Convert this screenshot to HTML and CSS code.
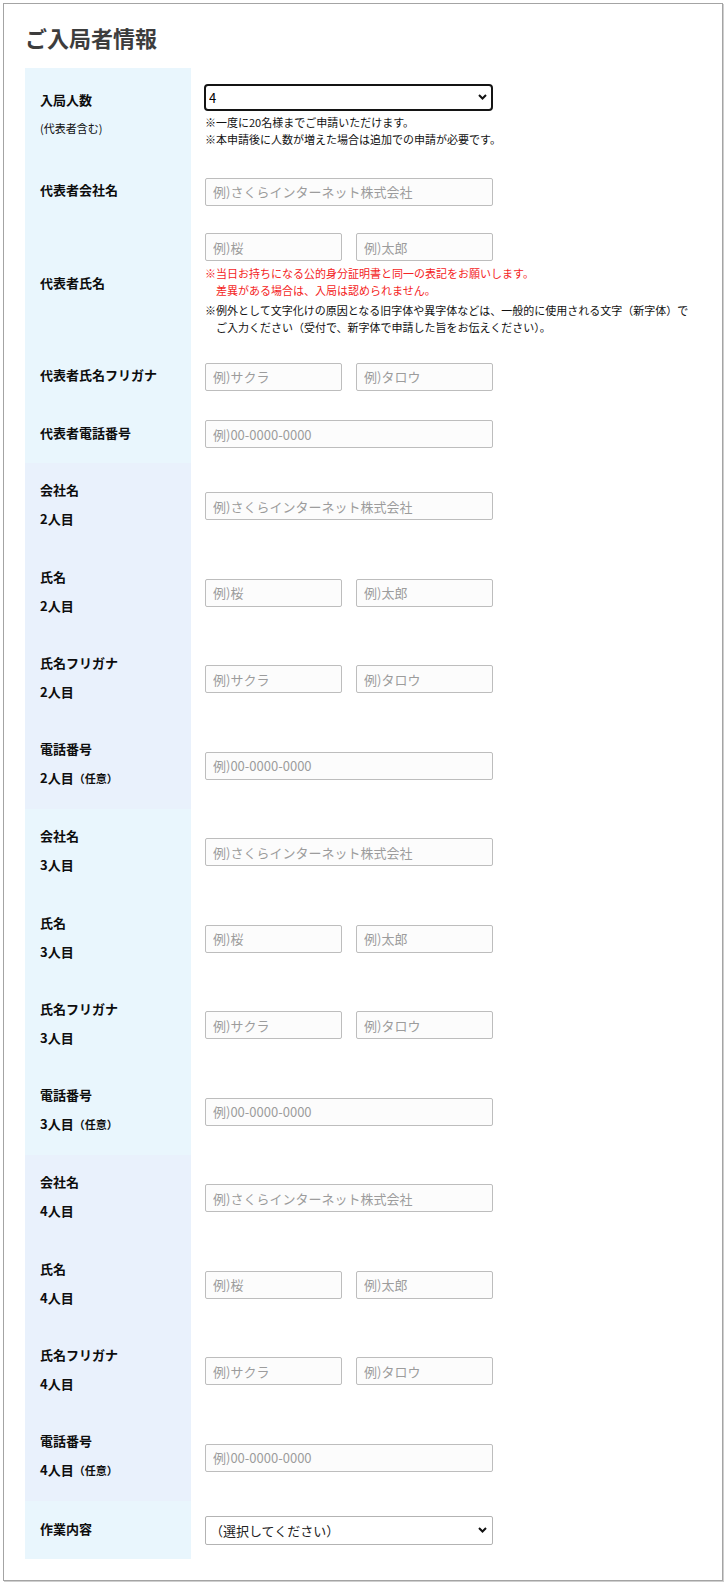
FILE: index.html
```html
<!DOCTYPE html>
<html lang="ja">
<head>
<meta charset="utf-8">
<title>ご入局者情報</title>
<link rel="stylesheet" href="styles.css">
</head>
<body>
<div class="page">
  <h2 class="title">ご入局者情報</h2>
  <div class="form">
    <div class="group g-a">
      <div class="row row-1">
        <div class="label"><span>入局人数</span><span class="sub">(代表者含む)</span></div>
        <div class="value">
          <div class="sel-wrap focus">
            <select class="sel"><option>4</option></select>
            <svg class="chev" viewBox="0 0 9 6"><polyline points="1,1 4.5,4.5 8,1" fill="none" stroke="#111" stroke-width="2"/></svg>
          </div>
          <p class="note">※一度に20名様までご申請いただけます。<br>※本申請後に人数が増えた場合は追加での申請が必要です。</p>
        </div>
      </div>
      <div class="row row-s">
        <div class="label"><span>代表者会社名</span></div>
        <div class="value"><input class="inp" type="text" placeholder="例)さくらインターネット株式会社"></div>
      </div>
      <div class="row row-3">
        <div class="label"><span>代表者氏名</span></div>
        <div class="value">
          <div class="pair"><input class="inp half" type="text" placeholder="例)桜"><input class="inp half" type="text" placeholder="例)太郎"></div>
          <p class="note warn">※当日お持ちになる公的身分証明書と同一の表記をお願いします。<br>差異がある場合は、入局は認められません。</p>
          <p class="note hang">※例外として文字化けの原因となる旧字体や異字体などは、一般的に使用される文字（新字体）で<br>ご入力ください（受付で、新字体で申請した旨をお伝えください）。</p>
        </div>
      </div>
      <div class="row row-s">
        <div class="label"><span>代表者氏名フリガナ</span></div>
        <div class="value"><div class="pair"><input class="inp half" type="text" placeholder="例)サクラ"><input class="inp half" type="text" placeholder="例)タロウ"></div></div>
      </div>
      <div class="row row-s">
        <div class="label"><span>代表者電話番号</span></div>
        <div class="value"><input class="inp" type="text" placeholder="例)00-0000-0000"></div>
      </div>
    </div>

    <div class="group g-b">
      <div class="row row-g">
        <div class="label"><span>会社名</span><span>2人目</span></div>
        <div class="value"><input class="inp" type="text" placeholder="例)さくらインターネット株式会社"></div>
      </div>
      <div class="row row-g">
        <div class="label"><span>氏名</span><span>2人目</span></div>
        <div class="value"><div class="pair"><input class="inp half" type="text" placeholder="例)桜"><input class="inp half" type="text" placeholder="例)太郎"></div></div>
      </div>
      <div class="row row-g">
        <div class="label"><span>氏名フリガナ</span><span>2人目</span></div>
        <div class="value"><div class="pair"><input class="inp half" type="text" placeholder="例)サクラ"><input class="inp half" type="text" placeholder="例)タロウ"></div></div>
      </div>
      <div class="row row-g">
        <div class="label"><span>電話番号</span><span>2人目<span class="opt">（任意）</span></span></div>
        <div class="value"><input class="inp" type="text" placeholder="例)00-0000-0000"></div>
      </div>
    </div>

    <div class="group g-a">
      <div class="row row-g">
        <div class="label"><span>会社名</span><span>3人目</span></div>
        <div class="value"><input class="inp" type="text" placeholder="例)さくらインターネット株式会社"></div>
      </div>
      <div class="row row-g">
        <div class="label"><span>氏名</span><span>3人目</span></div>
        <div class="value"><div class="pair"><input class="inp half" type="text" placeholder="例)桜"><input class="inp half" type="text" placeholder="例)太郎"></div></div>
      </div>
      <div class="row row-g">
        <div class="label"><span>氏名フリガナ</span><span>3人目</span></div>
        <div class="value"><div class="pair"><input class="inp half" type="text" placeholder="例)サクラ"><input class="inp half" type="text" placeholder="例)タロウ"></div></div>
      </div>
      <div class="row row-g">
        <div class="label"><span>電話番号</span><span>3人目<span class="opt">（任意）</span></span></div>
        <div class="value"><input class="inp" type="text" placeholder="例)00-0000-0000"></div>
      </div>
    </div>

    <div class="group g-b">
      <div class="row row-g">
        <div class="label"><span>会社名</span><span>4人目</span></div>
        <div class="value"><input class="inp" type="text" placeholder="例)さくらインターネット株式会社"></div>
      </div>
      <div class="row row-g">
        <div class="label"><span>氏名</span><span>4人目</span></div>
        <div class="value"><div class="pair"><input class="inp half" type="text" placeholder="例)桜"><input class="inp half" type="text" placeholder="例)太郎"></div></div>
      </div>
      <div class="row row-g">
        <div class="label"><span>氏名フリガナ</span><span>4人目</span></div>
        <div class="value"><div class="pair"><input class="inp half" type="text" placeholder="例)サクラ"><input class="inp half" type="text" placeholder="例)タロウ"></div></div>
      </div>
      <div class="row row-g">
        <div class="label"><span>電話番号</span><span>4人目<span class="opt">（任意）</span></span></div>
        <div class="value"><input class="inp" type="text" placeholder="例)00-0000-0000"></div>
      </div>
    </div>

    <div class="group g-a">
      <div class="row row-last">
        <div class="label"><span>作業内容</span></div>
        <div class="value">
          <div class="sel-wrap">
            <select class="sel"><option>（選択してください）</option></select>
            <svg class="chev" viewBox="0 0 9 6"><polyline points="1,1 4.5,4.5 8,1" fill="none" stroke="#111" stroke-width="2"/></svg>
          </div>
        </div>
      </div>
    </div>
  </div>
</div>
</body>
</html>
```

FILE: styles.css
```css
html, body {
  margin: 0;
  padding: 0;
  background: #ffffff;
}
body {
  font-family: "Noto Sans CJK JP", "Noto Sans", sans-serif;
  color: #111111;
}
.page {
  margin: 3px;
  width: 720px;
  box-sizing: border-box;
  border: 1px solid #a4a4a4;
  box-shadow: 1px 1px 0 #cfcfcf;
  padding: 18px 21px 21px;
}
.title {
  margin: 0 0 16px;
  font-size: 22px;
  line-height: 30px;
  font-weight: 700;
  color: #3d3d3d;
}
.row {
  display: grid;
  grid-template-columns: 166px 1fr;
}
.row-1 { min-height: 95px; }
.row-s { min-height: 57.5px; }
.row-3 { min-height: 127.5px; }
.row-g { min-height: 86.5px; }
.row-last { min-height: 58px; }

.label {
  display: flex;
  flex-direction: column;
  justify-content: center;
  padding: 0 15px 4px;
  font-size: 13px;
  font-weight: 700;
  line-height: 29px;
  color: #0d0d0d;
}
.g-a .label { background: #e9f6fd; }
.g-b .label { background: #e9f1fc; }
.label .sub {
  font-size: 11px;
  font-weight: 400;
}
.label .opt {
  font-size: 11px;
}
.value {
  display: flex;
  flex-direction: column;
  justify-content: center;
  align-items: flex-start;
  padding: 0 0 0 14px;
}
.inp {
  box-sizing: border-box;
  width: 288px;
  height: 28px;
  margin: 0;
  border: 1px solid #bdbdbd;
  border-radius: 2px;
  background: #fcfcfc;
  padding: 0 7px;
  font-family: "Noto Sans CJK JP", sans-serif;
  font-size: 13px;
  color: #222222;
  outline: none;
}
.inp::placeholder {
  color: #9c9c9c;
}
.inp.half {
  width: 137px;
}
.pair {
  display: flex;
  gap: 14px;
}
.sel-wrap {
  position: relative;
  width: 288px;
}
.sel {
  -webkit-appearance: none;
  appearance: none;
  display: block;
  box-sizing: border-box;
  width: 100%;
  height: 29px;
  margin: 0;
  border: 1px solid #b3b3b3;
  border-radius: 2px;
  background: #ffffff;
  padding: 0 24px 0 4px;
  font-family: "Noto Sans CJK JP", sans-serif;
  font-size: 13px;
  color: #222222;
  outline: none;
}
.sel-wrap.focus {
  width: 289px;
  margin-left: -1px;
}
.sel-wrap.focus .sel {
  height: 27px;
  border: 2px solid #141414;
  border-radius: 4px;
  padding-left: 3px;
  color: #000000;
}
.chev {
  position: absolute;
  right: 6px;
  top: 50%;
  width: 9px;
  height: 6px;
  margin-top: -3px;
  pointer-events: none;
}
.note {
  margin: 3px 0 0;
  font-size: 11px;
  line-height: 17px;
  color: #111111;
}
.warn {
  margin-top: 4px;
  line-height: 16.5px;
  color: #f42424;
  padding-left: 1em;
  text-indent: -1em;
}
.hang {
  margin-top: 4px;
  line-height: 16.5px;
  padding-left: 1em;
  text-indent: -1em;
}
```
